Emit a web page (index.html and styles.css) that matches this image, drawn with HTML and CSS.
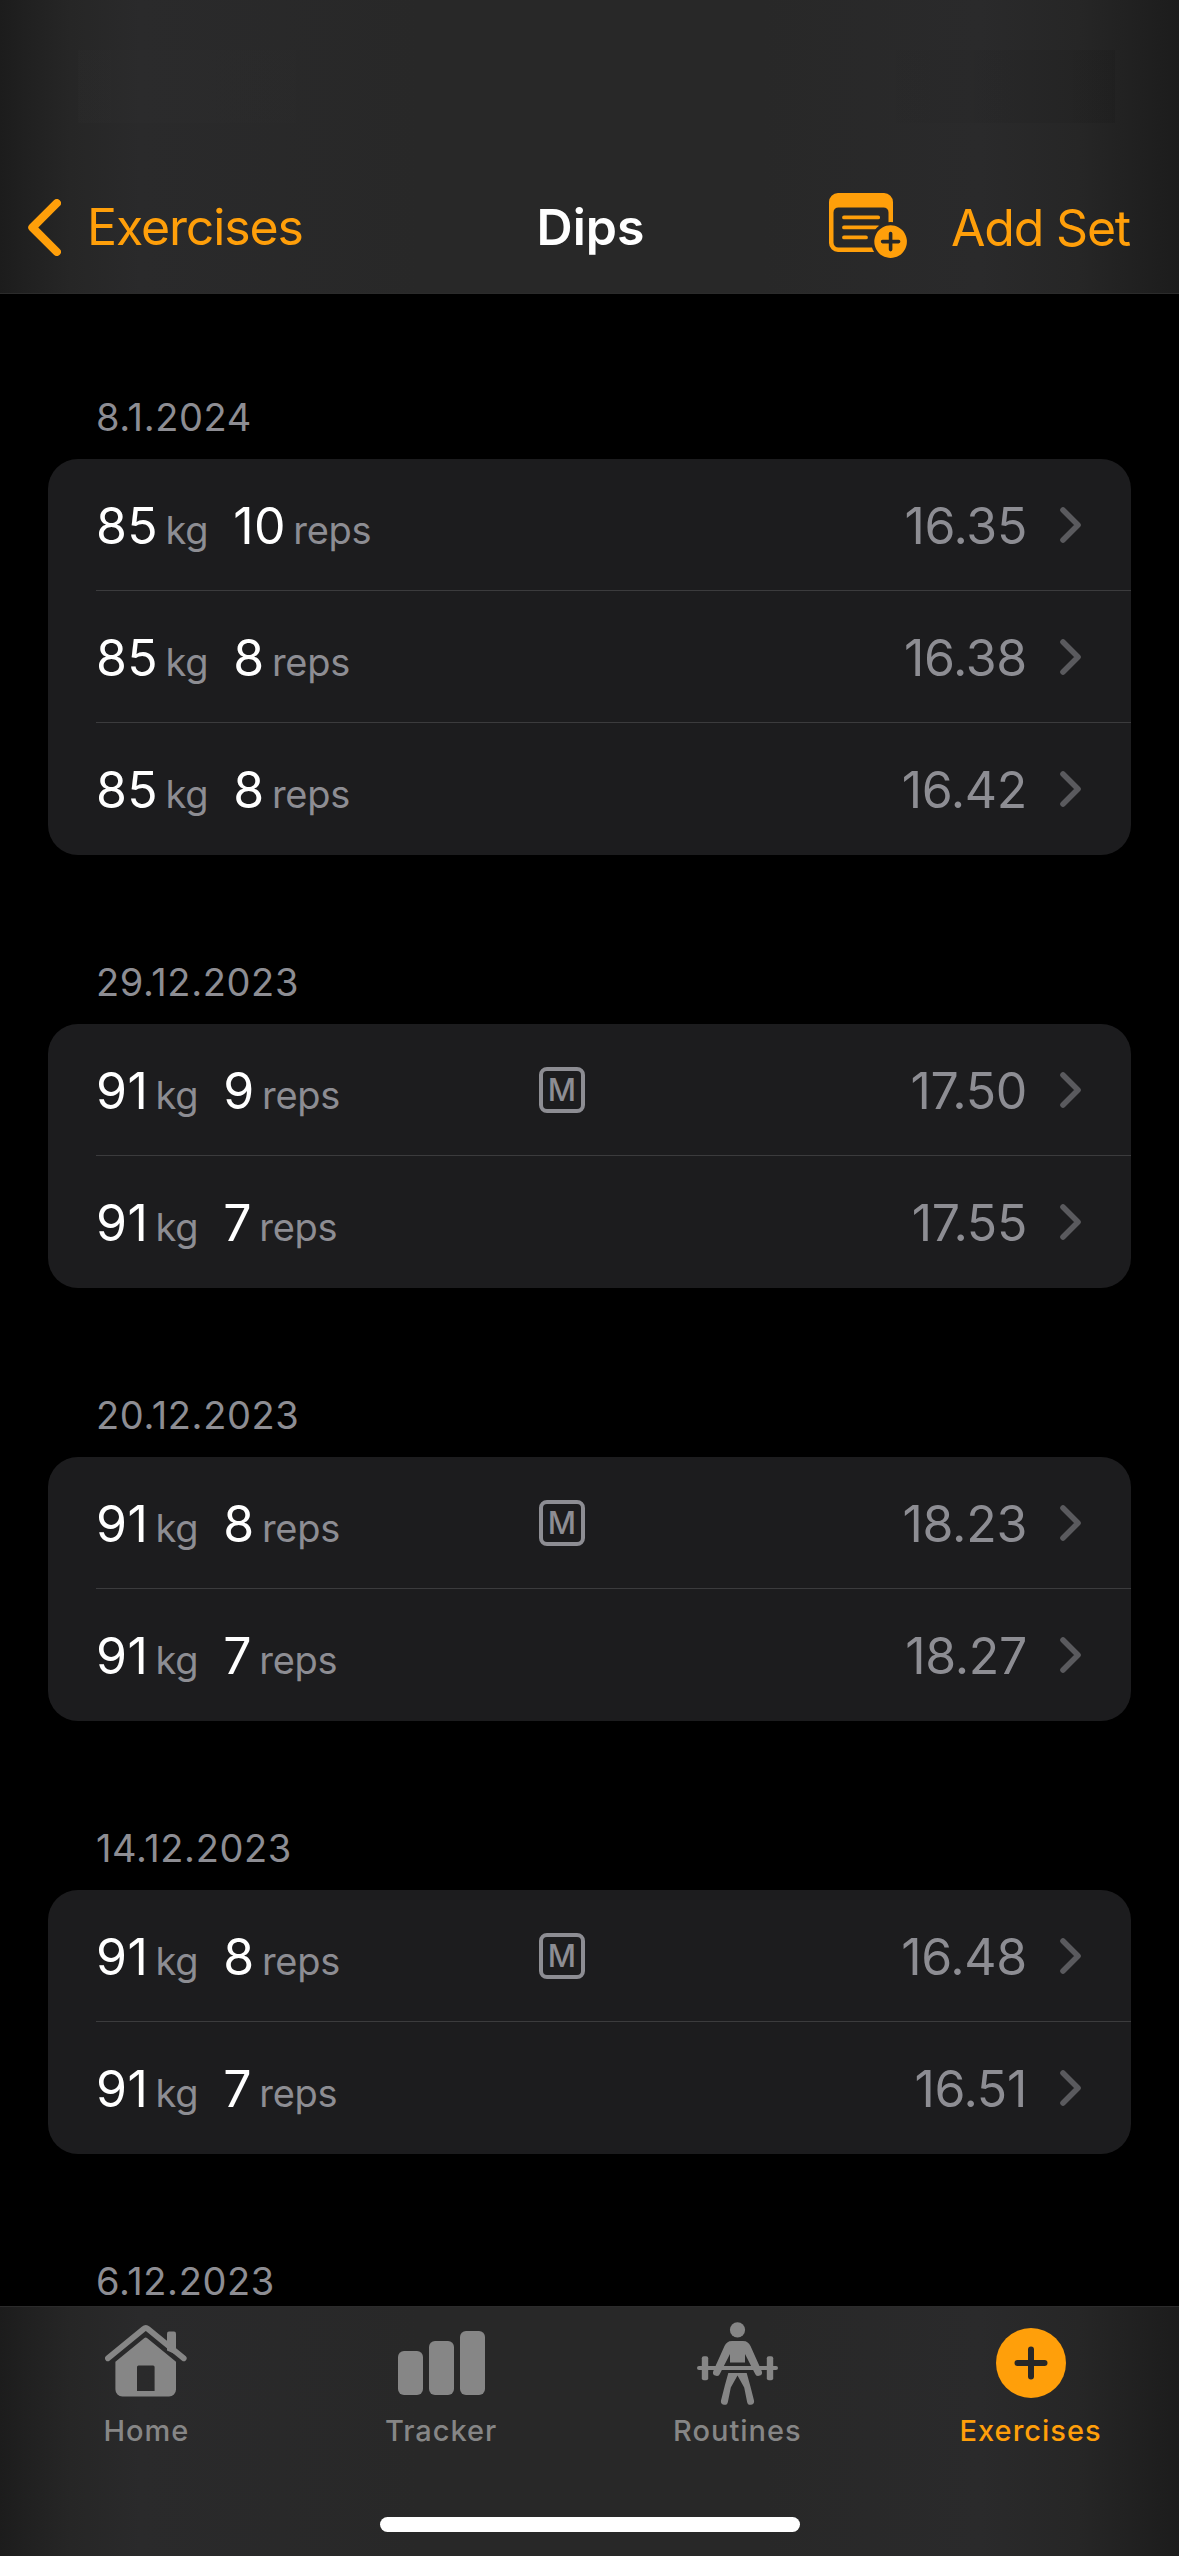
FILE: index.html
```
<!DOCTYPE html>
<html lang="en">
<head>
<meta charset="utf-8">
<title>Dips</title>
<link rel="stylesheet" href="styles.css">
</head>
<body>
<svg class="defs" width="0" height="0" aria-hidden="true">
  <symbol id="chevron" viewBox="0 0 21 36">
    <path d="M3 3L18 18L3 33" fill="none" stroke="currentColor" stroke-width="5.6" stroke-linecap="round" stroke-linejoin="round"/>
  </symbol>
</svg>

<header class="header">
  <div class="status"></div>
  <nav class="nav">
    <a class="back">
      <svg width="33" height="57" viewBox="0 0 33 57"><path d="M28.8 4.2L4.4 28.5L28.8 52.8" fill="none" stroke="currentColor" stroke-width="8.2" stroke-linecap="round" stroke-linejoin="round"/></svg>
      <span class="back-label">Exercises</span>
    </a>
    <h1 class="title">Dips</h1>
    <div class="actions">
      <svg class="note-icon" width="78" height="65" viewBox="9 13 78 65">
        <mask id="badge-gap" maskUnits="userSpaceOnUse" x="0" y="0" width="100" height="90">
          <rect width="100" height="90" fill="#fff"/>
          <circle cx="70.6" cy="61.6" r="19.6" fill="#000"/>
        </mask>
        <g mask="url(#badge-gap)" fill="currentColor">
          <path fill-rule="evenodd" d="M18 13H64A9 9 0 0 1 73 22V63A9 9 0 0 1 64 72H18A9 9 0 0 1 9 63V22A9 9 0 0 1 18 13ZM18.5 27.4A5 5 0 0 0 13.5 32.4V62.6A5 5 0 0 0 18.5 67.6H63.5A5 5 0 0 0 68.5 62.6V32.4A5 5 0 0 0 63.5 27.4Z"/>
          <path d="M24 37.4H58.2M24 47.4H58.2M24 57.4H46" stroke="currentColor" stroke-width="3.8" stroke-linecap="round"/>
        </g>
        <path fill="currentColor" d="M70.6 45.3a16.3 16.3 0 1 0 .01 0Z"/>
        <path class="plus-cut" d="M62.6 61.6H78.6M70.6 53.6V69.6" stroke-width="3.6" stroke-linecap="round"/>
      </svg>
      <span class="add">Add Set</span>
    </div>
  </nav>
</header>

<main class="list">
  <section class="day">
    <h2 class="date">8.1.2024</h2>
    <div class="card">
      <div class="row"><div class="set"><b>85</b><i>kg</i><b>10</b><i>reps</i></div><span class="time">16.35</span><svg class="chevron"><use href="#chevron"/></svg></div>
      <div class="row"><div class="set"><b>85</b><i>kg</i><b>8</b><i>reps</i></div><span class="time">16.38</span><svg class="chevron"><use href="#chevron"/></svg></div>
      <div class="row"><div class="set"><b>85</b><i>kg</i><b>8</b><i>reps</i></div><span class="time">16.42</span><svg class="chevron"><use href="#chevron"/></svg></div>
    </div>
  </section>
  <section class="day">
    <h2 class="date">29.12.2023</h2>
    <div class="card">
      <div class="row"><div class="set"><b>91</b><i>kg</i><b>9</b><i>reps</i></div><span class="mark">M</span><span class="time">17.50</span><svg class="chevron"><use href="#chevron"/></svg></div>
      <div class="row"><div class="set"><b>91</b><i>kg</i><b>7</b><i>reps</i></div><span class="time">17.55</span><svg class="chevron"><use href="#chevron"/></svg></div>
    </div>
  </section>
  <section class="day">
    <h2 class="date">20.12.2023</h2>
    <div class="card">
      <div class="row"><div class="set"><b>91</b><i>kg</i><b>8</b><i>reps</i></div><span class="mark">M</span><span class="time">18.23</span><svg class="chevron"><use href="#chevron"/></svg></div>
      <div class="row"><div class="set"><b>91</b><i>kg</i><b>7</b><i>reps</i></div><span class="time">18.27</span><svg class="chevron"><use href="#chevron"/></svg></div>
    </div>
  </section>
  <section class="day">
    <h2 class="date">14.12.2023</h2>
    <div class="card">
      <div class="row"><div class="set"><b>91</b><i>kg</i><b>8</b><i>reps</i></div><span class="mark">M</span><span class="time">16.48</span><svg class="chevron"><use href="#chevron"/></svg></div>
      <div class="row"><div class="set"><b>91</b><i>kg</i><b>7</b><i>reps</i></div><span class="time">16.51</span><svg class="chevron"><use href="#chevron"/></svg></div>
    </div>
  </section>
  <section class="day">
    <h2 class="date">6.12.2023</h2>
  </section>
</main>

<footer class="tabbar">
  <div class="tabs">
    <a class="tab">
      <span class="tab-icon tab-icon-home">
        <svg width="82" height="73" viewBox="45 103.5 82 73" fill="currentColor">
          <path d="M107 130V113a2 2 0 0 1 2-2h5a2 2 0 0 1 2 2V134Z"/>
          <path d="M47.9 137.8L83.6 108.4Q85.8 106.6 88 108.4L123.7 137.8" fill="none" stroke="currentColor" stroke-width="5.8" stroke-linecap="round"/>
          <path fill-rule="evenodd" d="M84.4 117.5Q85.7 116.4 87 117.5L116 141.3V169a7 7 0 0 1-7 7H62.4a7 7 0 0 1-7-7V141.3ZM78.5 145a1.5 1.5 0 0 0-1.5 1.5V170.5H94.6V146.5a1.5 1.5 0 0 0-1.5-1.5Z"/>
        </svg>
      </span>
      <span class="tab-label">Home</span>
    </a>
    <a class="tab">
      <span class="tab-icon">
        <svg width="87" height="64" viewBox="0 0 87 64" fill="currentColor">
          <rect x="0" y="20" width="25" height="44" rx="6"/>
          <rect x="31" y="10" width="25" height="54" rx="6"/>
          <rect x="62" y="0" width="25" height="64" rx="6"/>
        </svg>
      </span>
      <span class="tab-label">Tracker</span>
    </a>
    <a class="tab tab-routines">
      <span class="tab-icon tab-icon-lifter">
        <svg width="83" height="84" viewBox="16 12 83 84" fill="currentColor">
          <circle cx="57.5" cy="19.8" r="7.6"/>
          <rect x="17" y="55.9" width="81" height="4" rx="2"/>
          <rect x="21.8" y="46.2" width="6.4" height="24" rx="2"/>
          <rect x="86.8" y="46.2" width="6.4" height="24" rx="2"/>
          <path d="M52 31H63C67 31 69 33 70.5 36L81.8 61.2A3.6 3.6 0 0 1 75.3 64.2L65 44V52.5H50V44L39.7 64.2A3.6 3.6 0 0 1 33.2 61.2L44.5 36C46 33 48 31 52 31Z"/>
          <path d="M48.3 63H66.7L70.3 76L74 90.6A3.5 3.5 0 0 1 67.1 92L64.2 77.5L57.5 65.5L50.8 77.5L47.9 92A3.5 3.5 0 0 1 41 90.6L44.7 76Z"/>
        </svg>
      </span>
      <span class="tab-label">Routines</span>
    </a>
    <a class="tab tab-active">
      <span class="tab-icon">
        <svg width="70" height="70" viewBox="0 0 70 70">
          <circle cx="35" cy="35" r="35" fill="currentColor"/>
          <path class="plus-cut" d="M21.5 35H48.5M35 21.5V48.5" stroke-width="6" stroke-linecap="round"/>
        </svg>
      </span>
      <span class="tab-label">Exercises</span>
    </a>
  </div>
  <div class="home-indicator"></div>
</footer>
</body>
</html>
```
FILE: styles.css
```
* {
  box-sizing: border-box;
}

body {
  margin: 0;
  width: 1179px;
  height: 2556px;
  display: flex;
  flex-direction: column;
  overflow: hidden;
  background: #000;
  color: #fff;
  font-family: Inter, "Liberation Sans", sans-serif;
}

svg {
  display: block;
  flex: none;
}

.defs {
  position: absolute;
}

.header,
.tabbar {
  flex: none;
  background: linear-gradient(90deg, #1c1c1c 0, #202020 25px, #262626 70px, #2a2a2b 140px, #282828 420px, #282828 760px, #2a2a2b 980px, #262626 1080px, #1f1f1f 1150px, #1c1c1c 1179px);
}

.header {
  height: 294px;
  border-bottom: 1px solid #2b2b2b;
}

.status {
  height: 73px;
  margin: 50px 64px 0 78px;
  background: linear-gradient(90deg, rgba(255, 255, 255, 0.008), transparent 30%, transparent 75%, rgba(0, 0, 0, 0.08));
}

.nav {
  height: 60px;
  margin-top: 74px;
  padding: 0 49px 0 28px;
  display: grid;
  grid-template-columns: 1fr auto 1fr;
  grid-template-rows: 60px;
  align-items: center;
  font-size: 50px;
  line-height: 60px;
}

.back {
  display: flex;
  align-items: center;
  gap: 26px;
  color: #ff9f0a;
}

.back-label {
  letter-spacing: -1.15px;
}

.title {
  margin: 0;
  padding-left: 23px;
  font-size: 50px;
  font-weight: 600;
}

.actions {
  display: flex;
  align-items: center;
  justify-content: flex-end;
  gap: 44px;
  color: #ff9f0a;
}

.note-icon {
  margin-bottom: 3px;
}

.add {
  padding-top: 2px;
  letter-spacing: -1.2px;
}

.plus-cut {
  fill: none;
  stroke: #282828;
}

.list {
  flex: 1;
  min-height: 0;
  padding: 100px 48px 0;
  display: flex;
  flex-direction: column;
  gap: 104px;
  overflow: hidden;
}

.day {
  flex: none;
}

.date {
  margin: 0 0 19px 48px;
  font-size: 38px;
  font-weight: 400;
  line-height: 46px;
  letter-spacing: 0.62px;
  color: #8d8d93;
}

.card {
  border-radius: 30px;
  background: #1c1c1e;
  overflow: hidden;
}

.row {
  height: 132px;
  margin-left: 48px;
  padding-right: 50px;
  display: flex;
  align-items: center;
  border-bottom: 1px solid #3b3b3d;
}

.row:last-child {
  border-bottom-color: transparent;
}

.set {
  width: 443px;
  padding-top: 2px;
  display: flex;
  align-items: baseline;
}

.set b {
  font-size: 50px;
  font-weight: 400;
  line-height: 62px;
  letter-spacing: 0.4px;
}

.set i {
  margin: 0 25px 0 7.4px;
  font-size: 38px;
  font-style: normal;
  line-height: 46px;
  letter-spacing: -0.3px;
  color: #8d8d93;
}

.mark {
  width: 46px;
  height: 46px;
  border: 4px solid #8d8d93;
  border-radius: 8px;
  font-size: 31px;
  font-weight: 500;
  line-height: 38px;
  text-align: center;
  color: #8d8d93;
}

.time {
  margin-left: auto;
  padding-top: 2px;
  font-size: 50px;
  line-height: 62px;
  letter-spacing: -0.3px;
  color: #8d8d93;
}

.chevron {
  width: 21px;
  height: 36px;
  margin-left: 33px;
  color: #5a5a5e;
}

.tabbar {
  height: 250px;
  display: flex;
  flex-direction: column;
  align-items: center;
  border-top: 1px solid #2b2b2b;
}

.tabs {
  width: 100%;
  margin-left: -2px;
  padding-top: 6px;
  display: grid;
  grid-template-columns: repeat(4, 1fr);
}

.tab {
  display: flex;
  flex-direction: column;
  align-items: center;
  color: #868686;
}

.tab-routines {
  padding-left: 3px;
}

.tab-active {
  color: #ff9f0a;
}

.tab-icon {
  height: 100px;
  display: flex;
  align-items: center;
}

.tab-icon-home {
  padding-bottom: 6px;
}

.tab-icon-lifter {
  padding-top: 2px;
}

.tab-label {
  font-size: 29px;
  font-weight: 500;
  line-height: 36px;
  letter-spacing: 1px;
}

.home-indicator {
  width: 420px;
  height: 15px;
  margin: auto 0 24px;
  border-radius: 8px;
  background: #fff;
}
```
